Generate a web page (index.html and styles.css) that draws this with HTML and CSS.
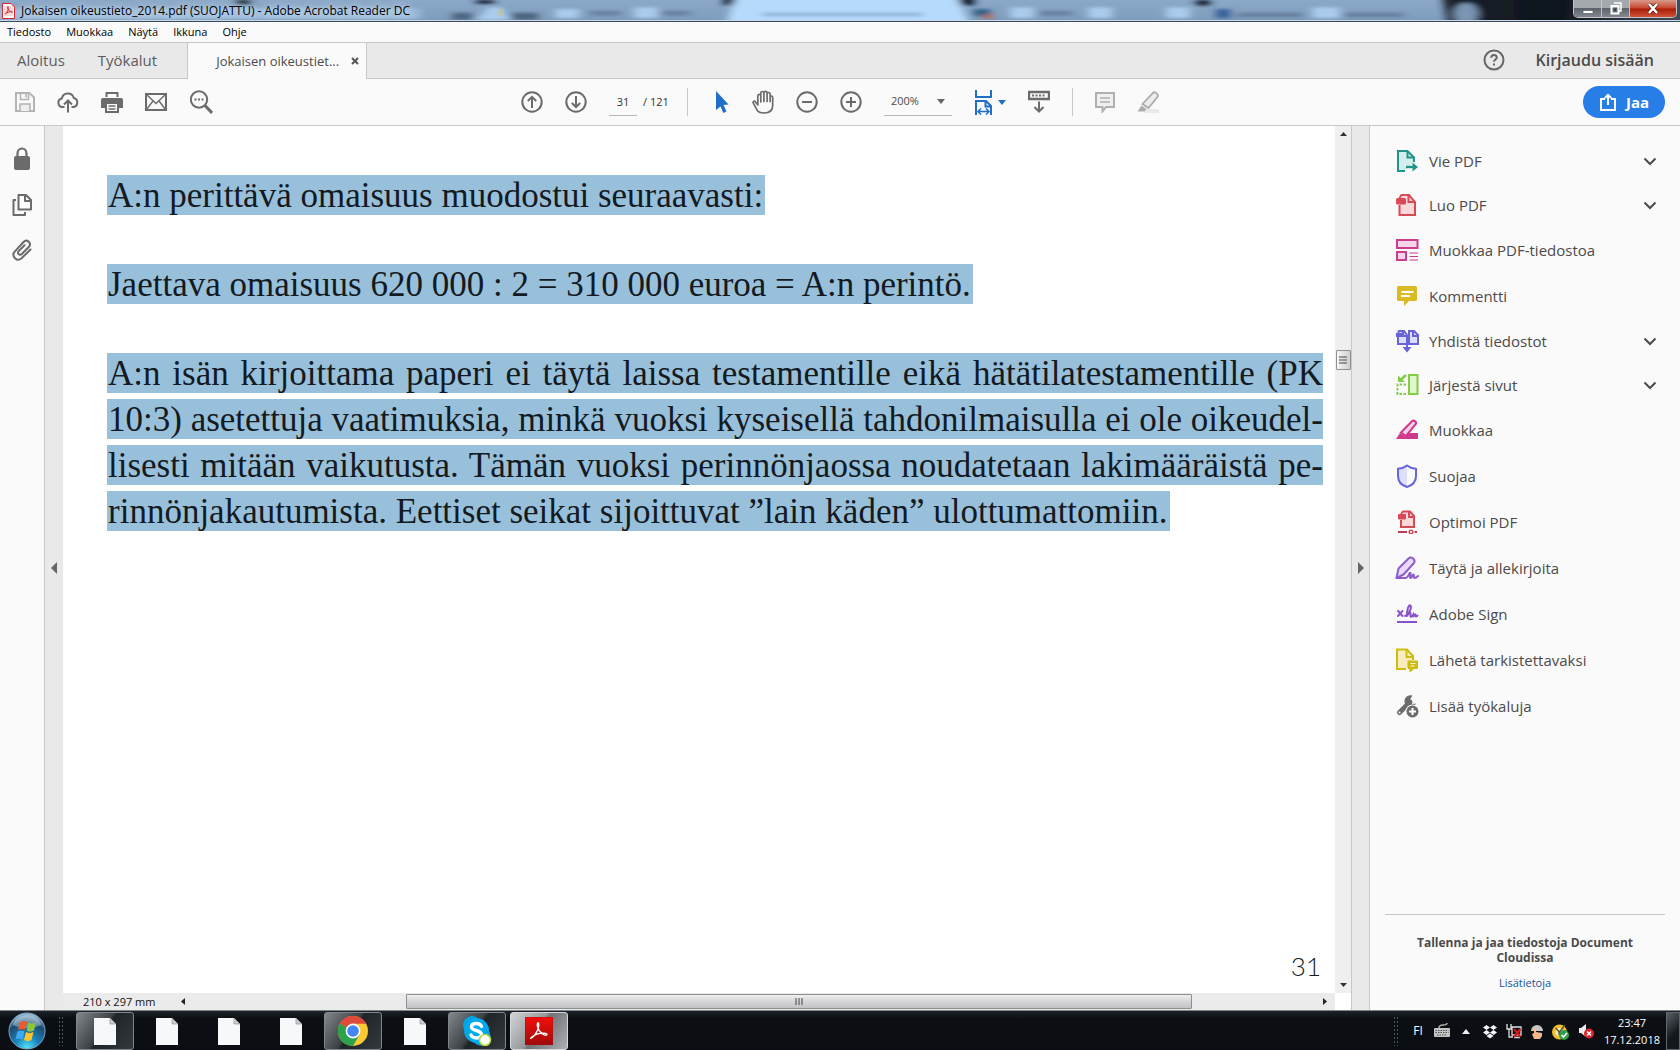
FILE: index.html
```html
<!DOCTYPE html>
<html lang="fi">
<head>
<meta charset="utf-8">
<title>Jokaisen oikeustieto_2014.pdf (SUOJATTU) - Adobe Acrobat Reader DC</title>
<link rel="stylesheet" href="styles.css">
</head>
<body>
<div class="screen">

<header class="titlebar">
  <svg class="glass" viewBox="0 0 1680 22" preserveAspectRatio="none" aria-hidden="true">
    <defs>
      <filter id="soft" x="-5%" y="-50%" width="110%" height="200%"><feGaussianBlur stdDeviation="4 2"/></filter>
      <linearGradient id="steel" x1="0" y1="0" x2="0" y2="1"><stop offset="0" stop-color="#8ba8c8"/><stop offset="1" stop-color="#7e9cbb"/></linearGradient>
      <linearGradient id="dark" x1="0" x2="1"><stop offset="0" stop-color="#1b2530"/><stop offset=".45" stop-color="#0d131a"/><stop offset="1" stop-color="#46515d"/></linearGradient>
    </defs>
    <rect width="1680" height="22" fill="url(#steel)"/>
    <g filter="url(#soft)">
      <rect x="-10" y="9" width="430" height="12" fill="#9dbbdb"/>
      <path d="M236 0h14v5h-14zM476 0h18v4h-18zM1196 0h14v6h-14z" fill="#122030"/>
      <path d="M476 22l12-14h14l8 14z" fill="#a9ccef"/>
      <path d="M452 14h20v8h-20zM512 14h26v8h-26z" fill="#4e6681"/>
      <path d="M555 10h24v10h-24zM634 8h24v12h-24zM1010 8h24v12h-24zM1088 8h24v12h-24zM1166 8h24v12h-24zM1312 8h28v12h-28z" fill="#aacbeb"/>
      <path d="M590 12h30v5h-30zM662 12h28v5h-28zM1040 12h32v5h-32zM1236 14h66v5h-66zM1344 14h60v5h-60z" fill="#66809d"/>
      <path d="M724 -3h18v9h-18zM960 -3h14v9h-14z" fill="#0f1c2b"/>
      <path d="M726 26l8-24q2-6 10-6h204q8 0 12 8l10 22z" fill="#b6dafc"/>
      <path d="M762 14h160v4h-160z" fill="#91b3d5"/>
      <path d="M974 10h16v8h-16z" fill="#2f5f86"/><path d="M984 15h8v6h-8z" fill="#b1674f"/>
      <path d="M1216 10h14v10h-14z" fill="#345f9a"/>
      <path d="M1442 -4h250v30h-244z" fill="url(#dark)"/>
      <circle cx="1466" cy="15" r="12" fill="#7a96b4"/>
    </g>
    <path d="M498 10h6v8h-6z" fill="#c9c48a" opacity=".5"/>
  </svg>
  <svg class="app-icon" width="13" height="16" viewBox="0 0 13 16"><path d="M.5.5h8.500l3.500 3.500v11.500h-12z" fill="#fff" stroke="#d8272d"/><path d="M2 3h9v10H2z" fill="#f7d9da"/><path d="M3 11c2-1 4-5 3-7.500-1.500 1.500 2 6 4.500 5.500-2-1-5 0-7.500 2z" fill="none" stroke="#d8272d"/></svg>
  <h1>Jokaisen oikeustieto_2014.pdf (SUOJATTU) - Adobe Acrobat Reader DC</h1>
  <div class="winbtns">
    <button aria-label="Pienennä"><svg width="12" height="12" viewBox="0 0 12 12"><path d="M1 7.500h10v3H1z" fill="#fff" stroke="#444a50" stroke-width=".6"/></svg></button>
    <button aria-label="Palauta"><svg width="12" height="13" viewBox="0 0 12 13"><path d="M4 1h7v8H9" fill="none" stroke="#fff" stroke-width="1.500"/><path d="M1.500 4h7v7.500h-7z" fill="none" stroke="#fff" stroke-width="2"/><path d="M4 6.500h2V9H4z" fill="#3c4249"/></svg></button>
    <button class="close" aria-label="Sulje"><svg width="12" height="11" viewBox="0 0 12 11"><path d="M2 1l8 9M10 1L2 10" stroke="#5a1a10" stroke-width="4"/><path d="M2 1l8 9M10 1L2 10" stroke="#fff" stroke-width="2.600"/></svg></button>
  </div>
</header>

<nav class="menubar">
  <button>Tiedosto</button><button>Muokkaa</button><button>Näytä</button><button>Ikkuna</button><button>Ohje</button>
</nav>

<div class="tabbar">
  <button class="tab home">Aloitus</button>
  <button class="tab tools-tab">Työkalut</button>
  <div class="tab-active"><span>Jokaisen oikeustiet...</span><button aria-label="Sulje välilehti"><svg width="8" height="8" viewBox="0 0 8 8"><path d="M1 1l6 6M7 1L1 7" stroke="#555" stroke-width="2"/></svg></button></div>
  <div class="account">
    <button aria-label="Ohje"><svg width="22" height="22" viewBox="0 0 22 22" fill="none" stroke="#666" stroke-width="2"><circle cx="11" cy="11" r="9.500"/><path d="M8.200 8.800c0-3.600 5.600-3.600 5.600-.400 0 2-2.800 2.200-2.800 4.400M11 14.500v2"/></svg></button>
    <button class="signin">Kirjaudu sisään</button>
  </div>
</div>

<div class="toolbar">
  <div class="group files">
    <button aria-label="Tallenna"><svg width="20" height="20" viewBox="1 1 20 20" fill="none" stroke="#b4b4b4" stroke-width="2"><path d="M2 2h13.500L20 6.500V20H2z"/><path d="M6.500 2v6.500h8V2M12 3v3.500" stroke-width="1.600"/><path d="M6 20v-7h10v7" stroke-width="1.600" fill="#eee"/></svg></button>
    <button aria-label="Jaa pilveen"><svg width="22" height="22" viewBox="0 0 22 22" fill="none" stroke="#6b6b6b" stroke-width="2"><path d="M7.500 16H5.500a4.300 4.300 0 0 1-.700-8.500A6.200 6.200 0 0 1 16.800 7a4.600 4.600 0 0 1-.300 9h-2M11 21.500V10M7 13.500l4-4 4 4"/></svg></button>
    <button aria-label="Tulosta"><svg width="22" height="22" viewBox="0 0 22 22"><path d="M4.500 1h13v5h-2V3h-9v3h-2z" fill="#6b6b6b"/><path d="M2 7h18q2 0 2 2v8h-4v-4H4v4H0V9q0-2 2-2z" fill="#6b6b6b"/><path d="M5 12h12v9H5z" fill="#fafafa" stroke="#6b6b6b" stroke-width="2"/><path d="M7.500 15h7M7.500 18h7" stroke="#6b6b6b" stroke-width="1.400"/></svg></button>
    <button aria-label="Sähköposti"><svg width="22" height="22" viewBox="0 0 22 22" fill="none" stroke="#6b6b6b"><path d="M1 3h20v16H1z" stroke-width="2"/><path d="M1.500 3.500L11 12.500l9.500-9M1.500 18.500L8 10M20.500 18.500L14 10" stroke-width="1.400"/></svg></button>
    <button aria-label="Etsi"><svg width="24" height="24" viewBox="0 0 24 24" fill="none" stroke="#6b6b6b"><circle cx="10" cy="9.500" r="8.200" stroke-width="2"/><path d="M16 15.500l7 7.500" stroke-width="3"/><path d="M5.500 9.500h2M9 9.500h2M12.500 9.500h2" stroke-width="2"/></svg></button>
  </div>
  <div class="group view">
    <button aria-label="Edellinen sivu"><svg width="22" height="22" viewBox="0 0 22 22" fill="none" stroke="#6b6b6b" stroke-width="2"><circle cx="11" cy="11" r="9.700"/><path d="M11 17V6M6.800 10L11 5.800 15.200 10"/></svg></button>
    <button aria-label="Seuraava sivu"><svg width="22" height="22" viewBox="0 0 22 22" fill="none" stroke="#6b6b6b" stroke-width="2"><circle cx="11" cy="11" r="9.700"/><path d="M11 5v11M6.800 12l4.200 4.200 4.200-4.200"/></svg></button>
    <div class="pages"><input type="text" value="31" aria-label="Sivunumero"><span>/ 121</span></div>
    <i class="sep"></i>
    <button class="pick" aria-label="Valitse"><svg width="14" height="22" viewBox="0 0 14 22"><path d="M1 0l12.500 13.500-5 .500 3 6.500-3.200 1.500-2.800-6.500L1 19z" fill="#1f6fc9"/></svg></button>
    <button aria-label="Käsi"><svg width="22" height="24" viewBox="0 0 22 24" fill="none" stroke="#6b6b6b" stroke-width="1.700" stroke-linecap="round" stroke-linejoin="round"><path d="M5.500 14.500L3.300 11.800c-1-1.200-2.800-.300-2 1.400l3.800 7C6.300 22.300 8.300 23 12 23c5.500 0 8.700-2.800 8.700-7.500V7.500c0-2-2.600-2-2.600 0v4M18.100 8.500V4c0-2-3-2-3 0v7.500M15.100 5V2.800c0-2-3.200-2-3.200 0v8.700M11.900 4V3c0-2-3.100-2-3.100 0v9M8.800 6c0-2.200-3-2.200-3 0v9"/></svg></button>
    <button aria-label="Loitonna"><svg width="22" height="22" viewBox="0 0 22 22" fill="none" stroke="#6b6b6b" stroke-width="2"><circle cx="11" cy="11" r="9.700"/><path d="M6 11h10"/></svg></button>
    <button aria-label="Lähennä"><svg width="22" height="22" viewBox="0 0 22 22" fill="none" stroke="#6b6b6b" stroke-width="2"><circle cx="11" cy="11" r="9.700"/><path d="M6 11h10M11 6v10"/></svg></button>
    <div class="zoom"><select aria-label="Zoomaus"><option>200%</option></select><svg width="8" height="5" viewBox="0 0 8 5"><path d="M0 0h8L4 5z" fill="#666"/></svg></div>
    <button class="fit" aria-label="Sovita leveyteen"><svg width="32" height="26" viewBox="0 0 32 26" fill="none" stroke="#1f6fc9" stroke-width="2"><path d="M2 1v7h15V1M2 26V12h10l5 5v9M11.500 12v5.500H17"/><path d="M4.500 22.500h10M7 19.500l-3 3 3 3M12 19.500l3 3-3 3" stroke-width="1.500"/><path d="M24 11h8l-4 5z" fill="#1f6fc9" stroke="none"/></svg></button>
    <button aria-label="Vieritys"><svg width="22" height="23" viewBox="1 0 22 23" fill="none" stroke="#6b6b6b"><path d="M2 2h20v7H2z" stroke-width="2.400"/><path d="M5 5.500h2M8.500 5.500h2M12 5.500h2M15.500 5.500h2" stroke-width="1.800"/><path d="M12 11.500v9.500M7.500 17l4.500 4.500 4.500-4.500" stroke-width="2"/></svg></button>
    <i class="sep"></i>
    <button aria-label="Kommentti"><svg width="20" height="22" viewBox="0 0 20 22" fill="#f0f0f0" stroke="#b0b0b0" stroke-width="2"><path d="M1 2h18v14H11l-3.500 4.500V16H1z"/><path d="M5 7h10M5 11h10" stroke-width="1.600"/></svg></button>
    <button aria-label="Korosta"><svg width="22" height="22" viewBox="0 0 22 22" fill="#ececec" stroke="#adadad" stroke-width="1.800"><path d="M9 18h13v4H6z" fill="#e9e9e9" stroke="none"/><path d="M5.500 13L16 1.800c1.500-1.500 6 1.200 4.800 3.700L11.500 17z"/><path d="M4.500 14.500l5 3.500-2 2.500H.500z" fill="#adadad" stroke="none"/></svg></button>
  </div>
  <button class="share"><svg width="18" height="18" viewBox="0 0 18 18" fill="none" stroke="#fff" stroke-width="2"><path d="M6 6H2v11h14V6h-4M9 12V2.500M5.800 5L9 1.800 12.200 5"/></svg>Jaa</button>
</div>

<main class="workspace">
  <aside class="rail">
    <button aria-label="Suojaus"><svg width="18" height="24" viewBox="0 0 18 24"><path d="M4.500 10V6.500a4.500 5 0 0 1 9 0V10" fill="none" stroke="#6b6b6b" stroke-width="2.200"/><rect x="1" y="9" width="16" height="14" rx="2" fill="#6b6b6b"/></svg></button>
    <button aria-label="Sivujen pikkukuvat"><svg width="20" height="24" viewBox="0 0 20 24" fill="none" stroke="#6b6b6b" stroke-width="2" stroke-linejoin="round"><path d="M6.500 2H14l5 5v9.500H6.500zM13 2v6h6"/><path d="M4 7H1.500v15H13v-3"/></svg></button>
    <button aria-label="Liitteet"><svg width="20" height="22" viewBox="0 0 20 22" fill="none" stroke="#6b6b6b" stroke-width="2" stroke-linecap="round"><path d="M18.500 10.500L9.500 19.300c-4.500 4-10.500-2-7-6.500L11.500 3c3.500-3.500 8.500 1 5.500 4.800L9.800 15c-2 2-4.800-.500-3.300-2.700l6-6"/></svg></button>
  </aside>
  <button class="gutter left" aria-label="Näytä siirtymisruutu"><svg width="6" height="12" viewBox="0 0 6 12"><path d="M6 0v12L0 6z" fill="#666"/></svg></button>

  <section class="viewer">
    <article class="page">
      <p><span class="line">A:n perittävä omaisuus muodostui seuraavasti:</span></p>
      <p><span class="line">Jaettava omaisuus 620 000 : 2 = 310 000 euroa = A:n perintö.</span></p>
      <p><span class="line full">A:n isän kirjoittama paperi ei täytä laissa testamentille eikä hätätilatestamentille (PK</span>
      <span class="line full">10:3) asetettuja vaatimuksia, minkä vuoksi kyseisellä tahdonilmaisulla ei ole oikeudel-</span>
      <span class="line full">lisesti mitään vaikutusta. Tämän vuoksi perinnönjaossa noudatetaan lakimääräistä pe-</span>
      <span class="line">rinnönjakautumista. Eettiset seikat sijoittuvat ”lain käden” ulottumattomiin.</span></p>
      <footer class="folio">31</footer>
    </article>
    <div class="vscroll">
      <svg width="7" height="4" viewBox="0 0 7 4"><path d="M3.500 0L7 4H0z" fill="#333"/></svg>
      <i class="above"></i>
      <span class="vthumb"><svg width="8" height="9" viewBox="0 0 8 9"><path d="M0 1h8M0 4h8M0 7h8" stroke="#444"/></svg></span>
      <i class="below"></i>
      <svg width="7" height="4" viewBox="0 0 7 4"><path d="M0 0h7L3.500 4z" fill="#333"/></svg>
    </div>
    <div class="hrow">
      <span class="size">210 x 297 mm</span>
      <svg width="4" height="7" viewBox="0 0 4 7"><path d="M4 0v7L0 3.500z" fill="#222"/></svg>
      <i class="before"></i>
      <span class="hthumb"><svg width="8" height="7" viewBox="0 0 8 7"><path d="M1 0v7M4 0v7M7 0v7" stroke="#444"/></svg></span>
      <i class="after"></i>
      <svg width="4" height="7" viewBox="0 0 4 7"><path d="M0 0v7l4-3.500z" fill="#222"/></svg>
    </div>
    <div class="corner"></div>
  </section>

  <button class="gutter right" aria-label="Piilota työkalut"><svg width="6" height="12" viewBox="0 0 6 12"><path d="M0 0v12l6-6z" fill="#666"/></svg></button>

  <aside class="tools">
    <ul>
      <li class="exp"><button><svg width="24" height="24" viewBox="0 0 24 24" fill="none" stroke="#20938c" stroke-width="2"><path d="M10 22H3V2h9.500L19 8.500V13" fill="#d3efec"/><path d="M12.500 2v6.500H19"/><path d="M11 18h8" stroke-width="2.400"/><path d="M17.500 13.500l5.500 4.500-5.500 4.500z" fill="#20938c" stroke="none"/></svg>Vie PDF<svg class="chev" width="14" height="9" viewBox="0 0 14 9"><path d="M1.500 1.500L7 7l5.500-5.500"/></svg></button></li>
      <li class="exp"><button><svg width="24" height="24" viewBox="0 0 24 24" fill="none" stroke="#d84a58" stroke-width="2"><path d="M4.500 12v10H20V9l-6-7H6.500L4.500 5" fill="#fad9da"/><path d="M13.500 2v7H20"/><rect x="1" y="5" width="10" height="6.500" rx="1.500" fill="#d84a58" stroke="none"/></svg>Luo PDF<svg class="chev" width="14" height="9" viewBox="0 0 14 9"><path d="M1.500 1.500L7 7l5.500-5.500"/></svg></button></li>
      <li><button><svg width="24" height="24" viewBox="0 0 24 24" fill="#fad4ea" stroke="#c93f8c" stroke-width="2"><path d="M2 2h20.500v8H2zM2 14h9v8H2z"/><path d="M14.500 15h8.500M14.500 18.500h8.500M14.500 22h8.500" stroke-width="1.200"/></svg>Muokkaa PDF-tiedostoa</button></li>
      <li><button><svg width="24" height="24" viewBox="0 0 24 24"><path d="M3.500 2h17q1.500 0 1.500 1.500v12q0 1.500-1.500 1.500H14l-5 5v-5H3.500Q2 17 2 15.500v-12Q2 2 3.500 2z" fill="#dbbb24"/><path d="M6.500 8h12M6 12h9" stroke="#fff" stroke-width="1.800"/></svg>Kommentti</button></li>
      <li class="exp"><button><svg width="24" height="24" viewBox="0 0 24 24" fill="#dcdcfb" stroke="#6664d8" stroke-width="2"><path d="M3 8v7h9V6L9 2H4L3 4M12 15h11V6l-4-4h-5v13M18 2v5h5M8 2v5h4"/><path d="M1 4h7v4H1z" fill="#6664d8" stroke="none"/><path d="M12 10v10" stroke-width="2"/><path d="M7.500 18h9L12 23.500z" fill="#6664d8" stroke="none"/></svg>Yhdistä tiedostot<svg class="chev" width="14" height="9" viewBox="0 0 14 9"><path d="M1.500 1.500L7 7l5.500-5.500"/></svg></button></li>
      <li class="exp"><button><svg width="24" height="24" viewBox="0 0 24 24" fill="none" stroke="#83cc45" stroke-width="2"><path d="M14 2h8.500v19H14z" fill="#dff5cf"/><path d="M11 11.500H2.500V21H12" stroke-dasharray="2.500 1.500"/><path d="M11 2L5.500 7" stroke-width="2.400"/><path d="M3 2.500V9h7z" fill="#83cc45" stroke="none"/></svg>Järjestä sivut<svg class="chev" width="14" height="9" viewBox="0 0 14 9"><path d="M1.500 1.500L7 7l5.500-5.500"/></svg></button></li>
      <li><button><svg width="24" height="24" viewBox="0 0 24 24"><path d="M12 15h11v6H9z" fill="#d13a8c"/><path d="M6 14.500L17 3.200c1.500-1.500 5 .500 3.800 2.800L11 18z" fill="#fbd3e8" stroke="#d13a8c" stroke-width="2"/><path d="M5 15l6 4-2 2H1z" fill="#d13a8c"/></svg>Muokkaa</button></li>
      <li><button><svg width="24" height="24" viewBox="0 0 24 24"><path d="M12 2C9.500 4 6 4.500 3.500 4.800V12c0 6 3.500 9 8.500 10.500z" fill="#dedffb"/><path d="M12 1.500C9.500 3.500 6 4.500 3 4.800V12c0 6 4 9.500 9 11 5-1.500 9-5 9-11V4.800c-3-.300-6.500-1.300-9-3.300z" fill="none" stroke="#6664d8" stroke-width="2"/></svg>Suojaa</button></li>
      <li><button><svg width="24" height="24" viewBox="0 0 24 24" fill="none" stroke="#d84a58" stroke-width="2"><path d="M6 10v7h13V6l-4-4.500H8L6 4" fill="#fad9da"/><path d="M14 2v5h5"/><rect x="3" y="4" width="8" height="5.500" rx="1" fill="#d84a58" stroke="none"/><path d="M3 22h9M19.500 22h2.500" stroke="#b43c5a"/><circle cx="16" cy="22" r="1.800" stroke-width="1.500"/></svg>Optimoi PDF</button></li>
      <li><button><svg width="24" height="24" viewBox="0 0 24 24" fill="none" stroke="#8d5ecb" stroke-width="2" stroke-linejoin="round" stroke-linecap="round"><path d="M1.500 22l2-9.500L13.500 2.500c2.500-2.500 7.500.500 5.500 4.500L8.500 18.500z" fill="#ead9fb"/><path d="M1.500 22H11c3.500-2 3-6 4.500-5 1 1-1.500 5 0 5s2-3.500 3-3.500-.500 3.500 1 3.500 2-.500 3.500-2"/></svg>Täytä ja allekirjoita</button></li>
      <li><button><svg width="24" height="24" viewBox="0 0 24 24" fill="none" stroke="#8952c9" stroke-width="2" stroke-linecap="round"><path d="M3 9l4.500 5M7.500 9L3 14M10 14c4-1.500 7-8 5.500-10.500-2-1.500-4 6-3.500 11 1.500-4.500 4-4.500 3.500-2-.500 3 1 3 2.500.500 0 2 1.500 1.500 2.500-1.500-.500 3 .5 4 2 2"/><path d="M2 20h20" stroke-linecap="butt"/></svg>Adobe Sign</button></li>
      <li><button><svg width="24" height="24" viewBox="0 0 24 24" fill="none" stroke="#cdbd13" stroke-width="2"><path d="M11 21H2V1.500h10L18 8v4" fill="#f9ecbd"/><path d="M11.500 2v7H17"/><path d="M13 13h9.500v7.500H19L15 24v-3.500h-2z" fill="#cdbd13" stroke="#cdbd13" stroke-width="1" stroke-linejoin="round"/><path d="M15.500 15.500h5M15.500 18h4" stroke="#fff7cf" stroke-width="1.200"/></svg>Lähetä tarkistettavaksi</button></li>
      <li><button><svg width="24" height="24" viewBox="0 0 24 24"><path d="M4.500 18.500L15 8" stroke="#6b6b6b" stroke-width="5" stroke-linecap="round"/><path d="M17.500 1.500a6 6 0 1 0 3.500 8l-3.500.500-3.500-3z" fill="#6b6b6b"/><circle cx="4.500" cy="18.500" r="1" fill="#fff"/><circle cx="17.500" cy="17.500" r="7" fill="#fafafa"/><circle cx="17.500" cy="17.500" r="6" fill="#6b6b6b"/><path d="M14 17.500h7M17.500 14v7" stroke="#fff" stroke-width="2"/></svg>Lisää työkaluja</button></li>
    </ul>
    <div class="promo"><strong>Tallenna ja jaa tiedostoja Document Cloudissa</strong><a href="#">Lisätietoja</a></div>
  </aside>
</main>

<footer class="taskbar">
  <button class="start" aria-label="Käynnistä"><svg width="38" height="38" viewBox="0 0 38 38"><defs><radialGradient id="orb" cx=".5" cy=".95" r=".9"><stop offset="0" stop-color="#55e0ff"/><stop offset=".35" stop-color="#1a86bd"/><stop offset=".75" stop-color="#1c4a72"/><stop offset="1" stop-color="#8fb4cc"/></radialGradient></defs><circle cx="19" cy="19" r="18" fill="url(#orb)" stroke="#7fa6c2"/><path d="M5 13C8 0 30 0 33 13c-8 4-20 4-28 0z" fill="#d7ebf5" opacity=".4"/><path d="M12 10c3-1.500 4.500-1.500 7 0l-2 8c-2.500-1.500-4.500-1.500-7 0z" fill="#f0592a"/><path d="M20.500 10.500c2.500 1.500 4.500 1.500 7.500 0l-2 8c-3 1.500-5 1.500-7.500 0z" fill="#8cc63e"/><path d="M9.500 19.500c3-1.500 4.500-1.500 7 0l-2 8c-2.500-1.500-4.500-1.500-7 0z" fill="#3fa9f5"/><path d="M18 20c2.500 1.500 4.500 1.500 7.500 0l-2 8c-3 1.500-5 1.500-7.500 0z" fill="#fdc52c"/></svg></button>
  <i class="grip"></i>
  <div class="apps">
    <button class="open" aria-label="Asiakirja 1"><svg width="22" height="27" viewBox="0 0 22 27"><path d="M0 0h16l6 6v21H0z" fill="#f7f8f9"/><path d="M16 0v6h6z" fill="#c9ccd0" stroke="#888" stroke-width=".6"/></svg></button>
    <button aria-label="Asiakirja 2"><svg width="22" height="27" viewBox="0 0 22 27"><path d="M0 0h16l6 6v21H0z" fill="#f7f8f9"/><path d="M16 0v6h6z" fill="#c9ccd0" stroke="#888" stroke-width=".6"/></svg></button>
    <button aria-label="Asiakirja 3"><svg width="22" height="27" viewBox="0 0 22 27"><path d="M0 0h16l6 6v21H0z" fill="#f7f8f9"/><path d="M16 0v6h6z" fill="#c9ccd0" stroke="#888" stroke-width=".6"/></svg></button>
    <button aria-label="Asiakirja 4"><svg width="22" height="27" viewBox="0 0 22 27"><path d="M0 0h16l6 6v21H0z" fill="#f7f8f9"/><path d="M16 0v6h6z" fill="#c9ccd0" stroke="#888" stroke-width=".6"/></svg></button>
    <button class="open" aria-label="Chrome"><svg width="30" height="30" viewBox="0 0 30 30"><circle cx="15" cy="15" r="15" fill="#fcc934"/><path d="M15 15L2 7.500A15 15 0 0 1 28 7.500H15z" fill="#de4b3b"/><path d="M2 7.500A15 15 0 0 0 15 30l6.500-11.300L15 15z" fill="#2ba24c"/><path d="M28 7.500H15L8.500 11.300 2 7.500A15 15 0 0 1 28 7.500z" fill="#de4b3b"/><circle cx="15" cy="15" r="7.400" fill="#fff"/><circle cx="15" cy="15" r="5.800" fill="#4285f4"/></svg></button>
    <button aria-label="Asiakirja 5"><svg width="22" height="27" viewBox="0 0 22 27"><path d="M0 0h16l6 6v21H0z" fill="#f7f8f9"/><path d="M16 0v6h6z" fill="#c9ccd0" stroke="#888" stroke-width=".6"/></svg></button>
    <button class="open" aria-label="Skype"><svg width="30" height="30" viewBox="0 0 30 30"><circle cx="10" cy="9" r="9" fill="#00a5e5"/><circle cx="19" cy="20" r="9.500" fill="#00a5e5"/><circle cx="14.500" cy="14.500" r="12.500" fill="#00a9ea"/><path d="M19.500 10.500C18 6.500 9.500 6.500 9.500 11c0 4.500 10 2.500 10 7.500 0 4.500-9 4.500-10.500.500" fill="none" stroke="#fff" stroke-width="3.400" stroke-linecap="round"/><circle cx="23" cy="24" r="5.500" fill="#fff" stroke="#b9d63a" stroke-width="1.500"/></svg></button>
    <button class="open active" aria-label="Adobe Acrobat Reader DC"><svg width="28" height="28" viewBox="0 0 28 28"><defs><linearGradient id="red" x2="0" y2="1"><stop stop-color="#f30f0b"/><stop offset="1" stop-color="#a10a0c"/></linearGradient></defs><rect width="28" height="28" fill="url(#red)" stroke="#8c1414" stroke-width=".5"/><path d="M6 21c3-1 9-9 7.500-15-2-1-1.500 5 1 8 3 4 7 5 7.500 3.500.500-2-9-2-13 1-2.500 1.500-4 3.500-3 2.500z" fill="none" stroke="#fff" stroke-width="1.400"/></svg></button>
  </div>
  <div class="tray">
    <i class="grip"></i>
    <span class="lang">FI</span>
    <svg width="16" height="16" viewBox="0 0 16 16"><path d="M5 5q0-3 4-3t4-2" fill="none" stroke="#aaa" stroke-width="1.500"/><rect y="5" width="16" height="9" rx="1" fill="#c4c4c4"/><path d="M1.500 7.500h13M1.500 9.500h13M3 12h10" stroke="#555" stroke-dasharray="1.500 1"/></svg>
    <svg class="more" width="8" height="5" viewBox="0 0 8 5"><path d="M4 0l4 5H0z" fill="#eee"/></svg>
    <svg width="16" height="16" viewBox="0 0 16 16" fill="#f4f4f4"><path d="M4.500 2L8 4.500 4.500 7 1 4.500zM11.500 2L15 4.500 11.500 7 8 4.500zM4.500 7L8 9.500 4.500 12 1 9.500zM11.500 7L15 9.500 11.500 12 8 9.500zM8 10.500l3.500 2.500L8 15.500 4.500 13z"/></svg>
    <svg width="16" height="16" viewBox="0 0 16 16" fill="none" stroke="#ddd" stroke-width="1.300"><path d="M1 1v5h4V1M3 6v8h4M6 4h9v8H6zM8 14.500h6"/><path d="M8 6l6.500 8M14.500 6L8 14" stroke="#d8171b" stroke-width="2"/></svg>
    <svg width="14" height="16" viewBox="0 0 14 16"><path d="M1 8a6 6 0 1 1 12 0z" fill="#c9c5c0"/><path d="M4 16l-2-5 2-1V5h2v4l6 1v3l-2 3z" fill="#f2b98c"/></svg>
    <svg width="18" height="17" viewBox="0 0 18 17"><circle cx="7.500" cy="9" r="7.500" fill="#f4bf2a"/><circle cx="7.500" cy="9" r="4" fill="#fbeec4"/><path d="M3.500 5l4 4 5.500-7M7 9v3" fill="none" stroke="#5b5330" stroke-width="1.500"/><circle cx="12" cy="12" r="5" fill="#2f9e45"/><path d="M9.500 12l2 2 3.500-4" fill="none" stroke="#fff" stroke-width="1.600"/></svg>
    <svg width="16" height="16" viewBox="0 0 16 16"><path d="M1 5h2l5-4v13l-5-4H1z" fill="#eee"/><circle cx="11" cy="10.500" r="5" fill="#d9262c"/><path d="M9 8.500l4 4M13 8.500l-4 4" stroke="#fff" stroke-width="1.500"/></svg>
    <time>23:47<br>17.12.2018</time>
    <button class="peek" aria-label="Näytä työpöytä"></button>
  </div>
</footer>
</div>
</body>
</html>
```
FILE: styles.css
```css
* { box-sizing: border-box; }
body {
  margin: 0;
  font: 15px/20px "Open Sans", "Noto Sans", sans-serif;
  color: #4b4b4b;
  background: #fafafa;
}
button, input, select { font: inherit; color: inherit; border: 0; padding: 0; margin: 0; background: none; }
button { display: flex; align-items: center; justify-content: center; }
svg { display: block; flex: none; }
h1, p, ul { margin: 0; padding: 0; }
i { display: block; }

.screen { display: flex; flex-direction: column; height: 100vh; min-height: 800px; }

/* Title bar */
.titlebar {
  position: relative;
  display: flex;
  align-items: flex-start;
  height: 22px;
  padding: 0 3px 0 2px;
  border-bottom: 1px solid #3b4a62;
  overflow: hidden;
}
.glass { position: absolute; left: 0; top: 0; width: 100%; height: 100%; border-bottom: 1px solid #c9d6e4; }
.app-icon { position: relative; margin-top: 3px; }
.titlebar h1 {
  position: relative;
  margin-left: 6px;
  font-size: 12px;
  line-height: 22px;
  font-weight: 400;
  color: #000;
  text-shadow: 0 0 6px #cfe2f5, 0 0 8px #cfe2f5;
}
.winbtns { position: relative; display: flex; margin-left: auto; border: 1px solid #c0c6cc; border-top: 0; border-radius: 0 0 5px 5px; overflow: hidden; }
.winbtns button { width: 28px; height: 17px; background: linear-gradient(#a4a9ad 45%, #5d646b 50%, #81888f); border-right: 1px solid #c0c6cc; }
.winbtns .close { width: 46px; border: 0; background: linear-gradient(#d99a8a, #c5472c 48%, #a91c06 52%, #d05238); }

/* Menus and tabs */
.menubar { display: flex; gap: 15px; height: 20px; padding: 0 7px; font-size: 11px; color: #000; }
.tabbar { display: flex; height: 37px; background: #e9e9e9; border: 1px solid #c8c8c8; border-width: 1px 0; }
.tab { color: #5c5c5c; }
.home { padding: 0 16px 1px 17px; }
.tools-tab { padding: 0 30px 1px 17px; }
.tab-active {
  display: flex;
  align-items: center;
  gap: 12px;
  width: 180px;
  margin-bottom: -1px;
  padding: 0 8px 1px 28px;
  font-size: 13px;
  white-space: nowrap;
  background: #fafafa;
  border: 1px solid #c8c8c8;
  border-width: 0 1px;
}
.account { display: flex; align-items: center; gap: 30px; margin-left: auto; padding: 0 26px 1px 0; }
.signin { font-size: 16px; font-weight: 600; }

/* Toolbar */
.toolbar {
  display: grid;
  grid-template-columns: 1fr auto 1fr;
  align-items: center;
  height: 47px;
  padding: 0 15px 1px;
  border-bottom: 1px solid #c8c8c8;
}
.group { display: flex; align-items: center; }
.files { gap: 22px; }
.view { gap: 22px; }
.pages { display: flex; gap: 6px; align-items: center; width: 56px; font-size: 11px; color: #333; white-space: nowrap; }
.pages input { width: 28px; height: 28px; text-align: center; border-bottom: 1px solid #b8b8b8; }
.sep { width: 1px; height: 28px; background: #c8c8c8; }
.pages + .sep { margin-right: 4px; }
.pick { width: 16px; }
.zoom { display: flex; align-items: center; justify-content: space-between; width: 68px; height: 28px; padding: 0 7px; font-size: 11px; border-bottom: 1px solid #b8b8b8; }
.zoom select { appearance: none; width: 40px; }
.share { justify-self: end; gap: 9px; width: 82px; height: 32px; border-radius: 16px; background: #267ee6; color: #fff; font-weight: 700; }

/* Workspace */
.workspace { display: grid; grid-template-columns: 45px 18px minmax(0, 1fr) 18px 311px; flex: 1; min-height: 0; }
.rail { display: flex; flex-direction: column; align-items: center; gap: 22px; padding-top: 21px; border-right: 1px solid #c8c8c8; }
.gutter { background: #e9e9e9; }
.gutter.right { border-left: 1px solid #c8c8c8; }
.viewer { display: grid; grid-template: minmax(0, 1fr) 17px / minmax(0, 1fr) 16px; min-height: 0; }
.page {
  display: flex;
  flex-direction: column;
  gap: 49px;
  padding: 49px 12px 10px 44px;
  background: #fff;
  color: #131a22;
  font: 35px/38px "Liberation Serif", serif;
}
.page p { display: flex; flex-direction: column; align-items: flex-start; gap: 6px; }
.line { background: #99c0da; white-space: nowrap; padding: 2px 2px 0 1px; }
.full { align-self: stretch; padding-right: 0; text-align: justify; text-align-last: justify; }
.folio { margin-top: auto; padding-right: 2px; text-align: right; font: 300 26px/34px Lato, sans-serif; }

.vscroll { display: flex; flex-direction: column; align-items: center; padding: 6px 0; background: #efefef; }
.above { flex: 213; }
.below { flex: 609; }
.vthumb, .hthumb { display: flex; align-items: center; justify-content: center; border: 1px solid #8f8f8f; border-radius: 1px; }
.vthumb { width: 15px; height: 20px; background: linear-gradient(90deg, #f6f6f6, #cfcfd2); }
.hrow { display: flex; align-items: center; padding: 0 8px 0 20px; background: #ebebeb; }
.size { width: 98px; font-size: 11px; line-height: 16px; color: #111; }
.before { flex: 221; }
.hthumb { flex: 783; height: 15px; background: linear-gradient(#f0f0f0, #d6d6d9 50%, #c2c2c6); }
.after { flex: 131; }
.corner { background: #fff; }

/* Tools panel */
.tools { display: flex; flex-direction: column; justify-content: space-between; padding: 13px 15px 0; border-left: 1px solid #c8c8c8; background: #fafafa; }
.tools ul { list-style: none; }
.tools li { height: 46px; display: flex; }
.tools .exp { height: 44px; }
.tools li button { flex: 1; justify-content: flex-start; gap: 10px; padding: 0 8px 0 10px; }
.chev { margin-left: auto; fill: none; stroke: #4b4b4b; stroke-width: 2; }
.promo { display: flex; flex-direction: column; align-items: center; gap: 9px; padding: 20px 20px 18px; border-top: 1px solid #c8c8c8; text-align: center; font-size: 12px; line-height: 15px; }
.promo a { font-size: 11px; line-height: 18px; color: #15509e; text-decoration: none; }

/* Taskbar */
.taskbar {
  display: flex;
  align-items: center;
  height: 40px;
  padding: 1px 0 0 8px;
  background: linear-gradient(#1c2228, #0b0f14 20%, #0a0d12);
  border-top: 1px solid #7c848c;
  color: #fff;
}
.grip { width: 7px; height: 30px; background: radial-gradient(circle, #4c545c 1px, transparent 1px) 0 0 / 3px 4px; }
.taskbar > .grip { margin: 0 11px 0 12px; }
.apps { display: flex; gap: 4px; }
.apps button { width: 58px; height: 38px; }
.apps .open { border: 1px solid #80868b; border-radius: 3px; background: linear-gradient(125deg, #83878b, #3c4146 45%, #1f2429 50%, #34393e); }
.apps .active { border-color: #d5d8da; background: linear-gradient(125deg, #d2d4d5, #96999b 45%, #6f7376 50%, #adb0b2); }
.tray { display: flex; align-items: center; gap: 8px; margin-left: auto; }
.tray .grip { margin-right: 5px; }
.lang { font-size: 12px; line-height: 16px; margin-right: 3px; }
.more { margin: 0 4px; }
.tray time { margin: 0 -2px 0 2px; font-size: 11px; line-height: 17px; text-align: center; }
.peek { width: 14px; height: 38px; border: 1px solid #60666c; background: linear-gradient(135deg, #595f65, #14181c 60%); }
```
